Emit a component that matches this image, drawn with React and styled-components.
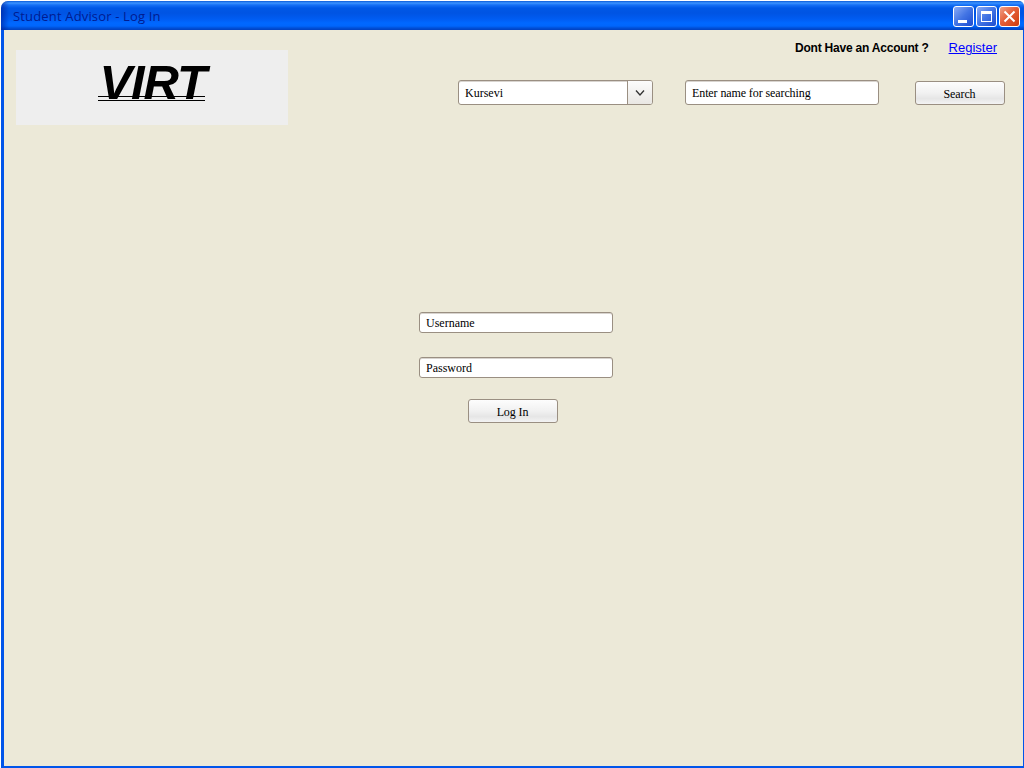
import React from "react";
import styled, { createGlobalStyle } from "styled-components";

const GlobalStyle = createGlobalStyle`
  * { box-sizing: border-box; }
  body { margin: 0; background: #fff; overflow: hidden; }
`;

const Window = styled.main`
  width: 1023px;
  height: 767px;
  margin: 1px 0 0 1px;
  display: flex;
  flex-direction: column;
  background: #ece9d8;
  border-radius: 7px 5px 0 0;
  overflow: hidden;
`;

const TitleBar = styled.header`
  height: 29px;
  flex: none;
  display: flex;
  align-items: center;
  justify-content: space-between;
  padding: 2px 4px 0 12px;
  background:
    linear-gradient(90deg, rgba(0, 30, 150, 0.6), rgba(0, 30, 150, 0) 8px),
    linear-gradient(180deg, #0a5ad8 0, #3c94ff 2px, #1670f5 4px, #0058e6 7px, #0054e3 12px, #005cf2 18px, #0068ff 22px, #0066fc 25px, #0050d8 27px, #0040c0 29px);
`;

const Title = styled.h1`
  margin: 0;
  padding-bottom: 2px;
  font: 500 13px/18px "Open Sans", "Noto Sans", sans-serif;
  letter-spacing: 0.16px;
  color: #001c90;
  white-space: nowrap;
`;

const WindowControls = styled.div`
  display: flex;
  gap: 2px;
`;

const ControlButton = styled.button`
  width: 21px;
  height: 21px;
  padding: 0;
  border: 1px solid #fff;
  border-radius: 3px;
  display: flex;
  background: ${({ $close }) =>
    $close
      ? "linear-gradient(135deg, #f0a088 0%, #e4603a 45%, #d03c0c 100%)"
      : "linear-gradient(135deg, #8aabf5 0%, #4274e4 50%, #1c4cd0 100%)"};
`;

const Client = styled.section`
  flex: 1;
  display: flex;
  flex-direction: column;
  border: solid #0055ea;
  border-width: 0 1px 2px 3px;
`;

const TopArea = styled.div`
  height: 282px;
  display: flex;
  align-items: flex-start;
  padding: 0 18px 0 12px;
`;

const Logo = styled.div`
  width: 272px;
  height: 75px;
  margin-top: 20px;
  padding-left: 82px;
  background: #eee;
`;

const LogoText = styled.div`
  width: 107px;
  height: 51px;
  font: italic bold 49px/64px "Liberation Sans", Arial, sans-serif;
  letter-spacing: -1.1px;
  text-indent: 1.5px;
  white-space: nowrap;
  color: #000;
  background:
    linear-gradient(#000, #000) 0 46px / 107px 1px no-repeat,
    linear-gradient(#000, #000) 0 50px / 107px 1px no-repeat;
`;

const Tools = styled.div`
  width: 547px;
  margin-left: auto;
`;

const AccountRow = styled.div`
  height: 50px;
  display: flex;
  justify-content: flex-end;
  gap: 20px;
  padding: 10px 8px 0 0;
  font: 12px/16px "Liberation Sans", Arial, sans-serif;
`;

const Prompt = styled.strong`
  color: #000;
  letter-spacing: -0.21px;
  white-space: nowrap;
`;

const RegisterLink = styled.a`
  font-size: 13px;
  color: #00f;
  text-decoration: underline;
`;

const SearchRow = styled.div`
  display: flex;
`;

const Field = styled.div`
  width: ${({ $width = 194 }) => $width}px;
  height: ${({ $height = 21 }) => $height}px;
  display: flex;
  align-items: center;
  padding-left: 6px;
  border: 1px solid #9a8f82;
  border-radius: 3px;
  background: #fff;
  box-shadow: inset 0 1px 0 #d8d4cf;
  font: 12px/16px "Liberation Serif", "Times New Roman", serif;
  color: #000;
  white-space: nowrap;
`;

const SearchField = styled(Field)`
  margin: 0 36px 0 32px;
  letter-spacing: -0.1px;
`;

const DropArrow = styled.span`
  width: 25px;
  height: 23px;
  margin-left: auto;
  display: flex;
  border-left: 1px solid #9a8f82;
  border-radius: 0 2px 2px 0;
  background: linear-gradient(#fcfcfc, #e9e7e3);
`;

const PushButton = styled.button`
  width: 90px;
  height: 24px;
  padding: 1px 1px 0 0;
  border: 1px solid #9a8f82;
  border-radius: 3px;
  background: linear-gradient(#fdfdfd 0%, #f1f1f1 50%, #e6e6e6 75%, #f3f3f3 100%);
  font: 12px/16px "Liberation Serif", "Times New Roman", serif;
  letter-spacing: -0.1px;
  color: #000;
`;

const SearchButton = styled(PushButton)`
  margin-top: 1px;
`;

const LoginForm = styled.form`
  width: 194px;
  margin-left: 415px;
  display: flex;
  flex-direction: column;
  gap: 24px;
`;

const LoginButton = styled(PushButton)`
  margin: -3px 0 0 49px;
`;

export default function App() {
  return (
    <>
      <GlobalStyle />
      <Window>
        <TitleBar>
          <Title>Student Advisor - Log In</Title>
          <WindowControls>
            <ControlButton aria-label="Minimize">
              <svg width="19" height="19"><path d="M4 13h9v3H4z" fill="#fff" /></svg>
            </ControlButton>
            <ControlButton aria-label="Maximize">
              <svg width="19" height="19"><path d="M4 4h11v11H4zM5 7v7h9V7z" fill="#fff" fillRule="evenodd" /></svg>
            </ControlButton>
            <ControlButton $close aria-label="Close">
              <svg width="19" height="19"><path d="M4.5 4.5l10 10M14.5 4.5l-10 10" stroke="#fff" strokeWidth="2" /></svg>
            </ControlButton>
          </WindowControls>
        </TitleBar>
        <Client>
          <TopArea>
            <Logo><LogoText>VIRT</LogoText></Logo>
            <Tools>
              <AccountRow>
                <Prompt>Dont Have an Account ?</Prompt>
                <RegisterLink href="#">Register</RegisterLink>
              </AccountRow>
              <SearchRow>
                <Field $width={195} $height={25}>
                  Kursevi
                  <DropArrow>
                    <svg width="24" height="23"><path d="M8 9.5l4 4.5 4-4.5" fill="none" stroke="#333" strokeWidth="1.3" /></svg>
                  </DropArrow>
                </Field>
                <SearchField $height={25}>Enter name for searching</SearchField>
                <SearchButton type="button">Search</SearchButton>
              </SearchRow>
            </Tools>
          </TopArea>
          <LoginForm>
            <Field>Username</Field>
            <Field>Password</Field>
            <LoginButton type="button">Log In</LoginButton>
          </LoginForm>
        </Client>
      </Window>
    </>
  );
}
